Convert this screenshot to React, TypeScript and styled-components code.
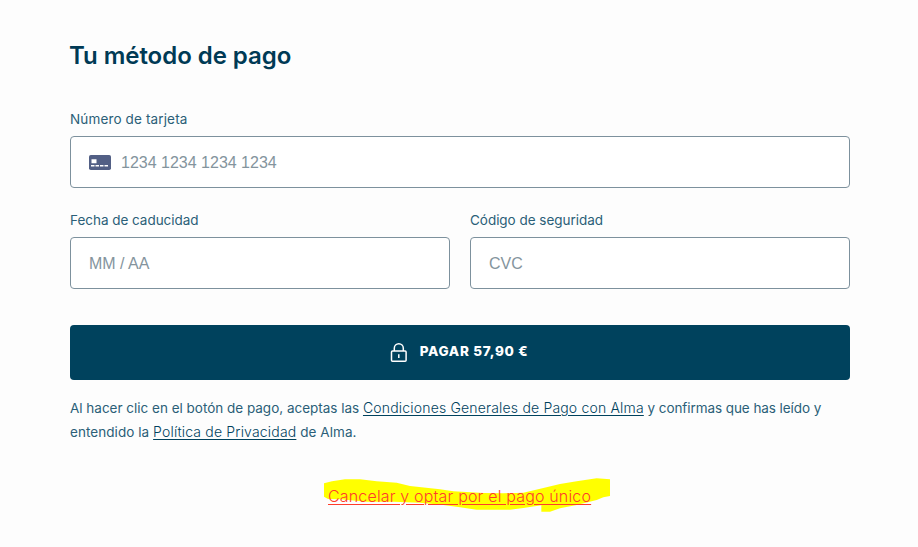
import React from "react";
import styled, { createGlobalStyle } from "styled-components";

const GlobalStyle = createGlobalStyle`
  * { box-sizing: border-box; }
  body { margin: 0; background: #fdfdfd; font-family: Inter, sans-serif; color: #00425d; }
`;

const Page = styled.main`
  width: 780px;
  min-height: 547px;
  margin-left: 70px;
  padding-top: 38px;
  display: flex;
  flex-direction: column;
`;

const Title = styled.h1`
  margin: 0 0 36px -1px;
  font-size: 24px;
  line-height: 36px;
  font-weight: 600;
  letter-spacing: -0.04px;
  color: #003a55;
`;

const Fields = styled.form`
  display: grid;
  grid-template-columns: 1fr 1fr;
  gap: 23px 20px;
`;

const Field = styled.label<{ $wide?: boolean }>`
  grid-column: ${(p) => (p.$wide ? "1 / -1" : "auto")};
  display: flex;
  flex-direction: column;
  gap: 8px;
`;

const LabelText = styled.span<{ $spacing?: number }>`
  white-space: nowrap;
  font-size: 13.5px;
  line-height: 18px;
  letter-spacing: ${(p) => p.$spacing ?? -0.03}px;
  color: #2b5f78;
`;

const InputBox = styled.span`
  height: 52px;
  display: flex;
  align-items: center;
  gap: 10px;
  padding: 0 18px;
  border: 1px solid #7d919d;
  border-radius: 4px;
  background: #fff;
`;

const Input = styled.input`
  flex: 1;
  min-width: 0;
  padding: 2px 0 0;
  border: 0;
  outline: 0;
  background: transparent;
  font: 16px/20px "Liberation Sans", Arial, sans-serif;
  &::placeholder { color: #84949d; opacity: 1; }
`;

const PayButton = styled.button`
  height: 55px;
  margin-top: 36px;
  padding: 0 8px 0 6px;
  display: flex;
  align-items: center;
  justify-content: center;
  gap: 12px;
  border: 0;
  border-radius: 4px;
  background: #00425d;
  color: #fff;
  font: 800 13.5px/20px Inter, sans-serif;
  letter-spacing: 0.7px;
`;

const PayText = styled.span`
  margin-top: -3px;
`;

const Terms = styled.p`
  margin: 16px 0 0;
  font-size: 13.5px;
  line-height: 24px;
  white-space: nowrap;
  color: #2b5f78;
`;

const Run = styled.span<{ $spacing?: number }>`
  letter-spacing: ${(p) => p.$spacing ?? 0}px;
`;

const TermsLink = styled.a`
  color: #00425d;
  font-size: 14px;
  font-weight: 300;
  letter-spacing: 0.18px;
  text-decoration: underline;
  text-underline-offset: 2px;
`;

const CancelRow = styled.div`
  position: relative;
  height: 24px;
  margin-top: 40px;
  padding-left: 258px;
`;

const Marker = styled.svg`
  position: absolute;
  left: 240px;
  top: -14px;
`;

const CancelLink = styled.a`
  position: relative;
  font-size: 16px;
  line-height: 24px;
  font-weight: 300;
  letter-spacing: 0.17px;
  white-space: nowrap;
  color: #ff3b2b;
  text-decoration: underline;
  text-underline-offset: 2px;
`;

const CardIcon = () => (
  <svg width="22" height="15" viewBox="0 0 22 15">
    <rect width="22" height="15" rx="1.8" fill="#525f85" />
    <path d="M2.5 4.2h5v4h-5zM2 10h3.5v1.5H2zM6.5 10H10v1.5H6.5zM11 10h3.5v1.5H11zM15.5 10H19v1.5h-3.5z" fill="#fff" />
  </svg>
);

const LockIcon = () => (
  <svg width="18" height="20" viewBox="0 0 18 20" fill="none" stroke="#fff" strokeWidth="1.5">
    <rect x="1.5" y="8" width="14.6" height="10.3" rx="1" />
    <path d="M4.3 8V5.3a4.5 4.5 0 0 1 9 0V8M8.8 11.2v3.8" />
  </svg>
);

export default function App() {
  return (
    <>
      <GlobalStyle />
      <Page>
        <Title>Tu método de pago</Title>
        <Fields onSubmit={(e) => e.preventDefault()}>
          <Field $wide>
            <LabelText $spacing={0.14}>Número de tarjeta</LabelText>
            <InputBox><CardIcon /><Input placeholder="1234 1234 1234 1234" /></InputBox>
          </Field>
          <Field>
            <LabelText>Fecha de caducidad</LabelText>
            <InputBox><Input placeholder="MM / AA" /></InputBox>
          </Field>
          <Field>
            <LabelText>Código de seguridad</LabelText>
            <InputBox><Input placeholder="CVC" /></InputBox>
          </Field>
        </Fields>
        <PayButton type="button"><LockIcon /><PayText>PAGAR 57,90 €</PayText></PayButton>
        <Terms>
          <Run $spacing={-0.01}>Al hacer clic en el botón de pago, aceptas las </Run>
          <TermsLink>Condiciones Generales de Pago con Alma</TermsLink>
          <Run $spacing={-0.07}> y confirmas que has leído y</Run>
          <br />
          <Run $spacing={0.06}>entendido la </Run>
          <TermsLink>Política de Privacidad</TermsLink>
          <Run $spacing={0.06}> de Alma.</Run>
        </Terms>
        <CancelRow>
          <Marker width="310" height="50" viewBox="0 0 930 150">
            <path fill="#ff0" d="M42 40L66 34L105 28H150L200 34L260 38L300 48L390 58L430 64L520 69L580 70L640 68L700 54L750 42L800 34L860 25L900 28V78L880 82L860 90L800 105L750 115L720 125H694V106L640 114L600 119H500L450 112L400 105L330 98L250 95H170L90 88L54 87L42 80Z" />
          </Marker>
          <CancelLink>Cancelar y optar por el pago único</CancelLink>
        </CancelRow>
      </Page>
    </>
  );
}
